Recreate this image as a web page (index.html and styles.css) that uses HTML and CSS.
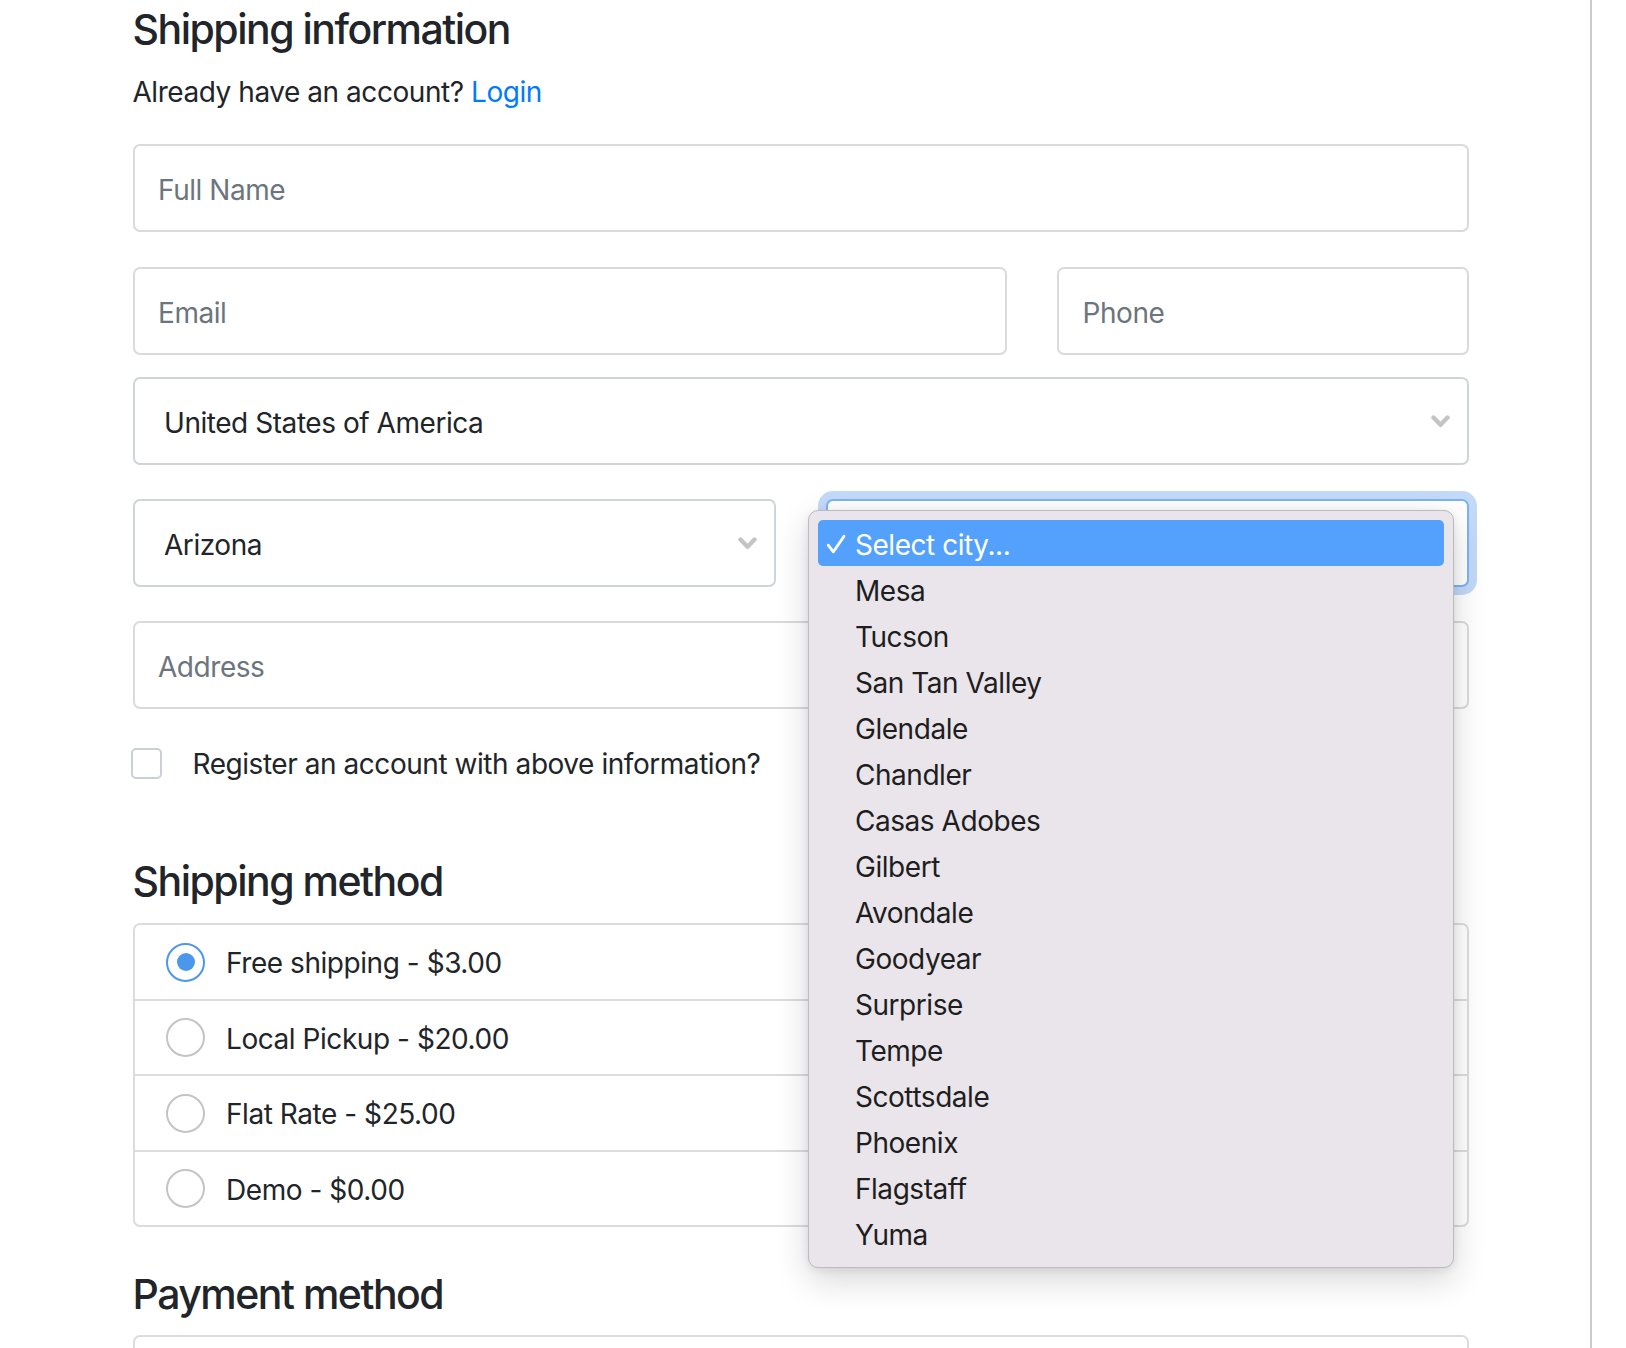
FILE: index.html
```html
<!DOCTYPE html>
<html lang="en">
<head>
<meta charset="utf-8">
<title>Checkout</title>
<link rel="stylesheet" href="styles.css">
</head>
<body>
<main class="main">
  <h4 class="title">Shipping information</h4>
  <p class="lead">Already have an account? <a href="#">Login</a></p>

  <div class="field input gap-35"><span class="ph">Full Name</span></div>

  <div class="row row-84 gap-22">
    <div class="field input"><span class="ph">Email</span></div>
    <div class="field input"><span class="ph">Phone</span></div>
  </div>

  <div class="field select gap-34">
    <span class="val">United States of America</span>
    <svg class="chev" width="19" height="13" viewBox="0 0 19 13"><polyline points="2.5,2.5 9.5,9.8 16.5,2.5" fill="none" stroke="#c4c4c4" stroke-width="4.4" stroke-linecap="round" stroke-linejoin="round"/></svg>
  </div>

  <div class="row row-66 gap-34">
    <div class="field select">
      <span class="val">Arizona</span>
      <svg class="chev" width="19" height="13" viewBox="0 0 19 13"><polyline points="2.5,2.5 9.5,9.8 16.5,2.5" fill="none" stroke="#c4c4c4" stroke-width="4.4" stroke-linecap="round" stroke-linejoin="round"/></svg>
    </div>
    <div class="field select focus">
      <div class="menu">
        <div class="opt sel"><svg class="mark" width="20" height="20" viewBox="0 0 20 20"><path d="M2.2 11.2 L7.4 17.8 L18 2.2" fill="none" stroke="#fff" stroke-width="2.8" stroke-linecap="round" stroke-linejoin="round"/></svg><span>Select city...</span></div>
        <div class="opt"><span class="mark"></span><span>Mesa</span></div>
        <div class="opt"><span class="mark"></span><span>Tucson</span></div>
        <div class="opt"><span class="mark"></span><span>San Tan Valley</span></div>
        <div class="opt"><span class="mark"></span><span>Glendale</span></div>
        <div class="opt"><span class="mark"></span><span>Chandler</span></div>
        <div class="opt"><span class="mark"></span><span>Casas Adobes</span></div>
        <div class="opt"><span class="mark"></span><span>Gilbert</span></div>
        <div class="opt"><span class="mark"></span><span>Avondale</span></div>
        <div class="opt"><span class="mark"></span><span>Goodyear</span></div>
        <div class="opt"><span class="mark"></span><span>Surprise</span></div>
        <div class="opt"><span class="mark"></span><span>Tempe</span></div>
        <div class="opt"><span class="mark"></span><span>Scottsdale</span></div>
        <div class="opt"><span class="mark"></span><span>Phoenix</span></div>
        <div class="opt"><span class="mark"></span><span>Flagstaff</span></div>
        <div class="opt"><span class="mark"></span><span>Yuma</span></div>
      </div>
    </div>
  </div>

  <div class="field input"><span class="ph">Address</span></div>

  <label class="check"><span class="cbox"></span><span>Register an account with above information?</span></label>

  <h4 class="title ship">Shipping method</h4>
  <ul class="list">
    <li><span class="radio on"></span><span>Free shipping - $3.00</span></li>
    <li><span class="radio"></span><span>Local Pickup - $20.00</span></li>
    <li><span class="radio"></span><span>Flat Rate - $25.00</span></li>
    <li><span class="radio"></span><span>Demo - $0.00</span></li>
  </ul>

  <h4 class="title pay">Payment method</h4>
  <div class="paybox"></div>
</main>
</body>
</html>
```

FILE: styles.css
```css
* { box-sizing: border-box; }

html, body {
  margin: 0;
  height: 1348px;
  overflow: hidden;
  background: #fff;
}

body {
  font-family: Inter, "Noto Sans", sans-serif;
  font-size: 28px;
  letter-spacing: -0.45px;
  color: #212529;
}

.main {
  width: 1592px;
  min-height: 1348px;
  padding: 4px 121px 0 132.5px;
  border-right: 2px solid #cbcbcb;
}

.title {
  margin: 0;
  font-size: 41px;
  font-weight: 500;
  line-height: 50px;
  letter-spacing: -1.5px;
  color: #212529;
}

.lead {
  margin: 16.5px 0 31.8px;
  line-height: 42px;
}

.lead a {
  color: #007bff;
  text-decoration: none;
}

.field {
  height: 88px;
  border: 2px solid #dadada;
  border-radius: 7px;
  background: #fff;
  display: flex;
  align-items: center;
  line-height: 42px;
  position: relative;
}

.input {
  padding: 3px 20px 0 23.5px;
}

.ph { color: #6c757d; }

.select {
  padding: 4px 17px 0 29.5px;
  border-color: #cfd4d9;
}

.select .val { flex: 1; color: #212529; }

.chev { flex: none; margin-top: -4px; }

.gap-35 { margin-bottom: 35px; }
.gap-22 { margin-bottom: 22px; }
.gap-34 { margin-bottom: 34px; }

.row { display: grid; column-gap: 50px; }
.row-84 { grid-template-columns: 874.5px 1fr; }
.row-66 { grid-template-columns: 1fr 1fr; }

.focus {
  border-color: #7db3f3;
  box-shadow: 0 0 0 8px #c3d9f9;
}

.menu {
  position: absolute;
  left: -20.2px;
  top: 8.5px;
  width: 646px;
  height: 758px;
  z-index: 10;
  background: #e9e5eb;
  border: 1px solid #bcbabe;
  border-radius: 10px;
  padding: 9.5px 9px;
  box-shadow: 0 12px 34px rgba(0, 0, 0, 0.16), 0 2px 8px rgba(0, 0, 0, 0.08);
}

.opt {
  height: 46px;
  display: flex;
  align-items: center;
  padding: 4px 0 0 8.4px;
  border-radius: 5px;
  color: #1e1e20;
  line-height: 42px;
}

.opt .mark {
  width: 20px;
  height: 20px;
  flex: none;
  margin-right: 9px;
  margin-top: -3px;
}

.opt.sel {
  background: #54a1fd;
  color: #fff;
}

.check {
  display: flex;
  align-items: center;
  height: 42px;
  margin: 33.5px 0 0 -2px;
  line-height: 42px;
}

.cbox {
  width: 31px;
  height: 31px;
  border: 2px solid #c9d0d8;
  border-radius: 5px;
  margin-right: 31px;
  flex: none;
}

.ship { margin: 71.2px 0 17.3px; }

.list {
  list-style: none;
  margin: 0;
  padding: 0;
  border: 2px solid #dcdcdc;
  border-radius: 7px;
}

.list li {
  height: 75.5px;
  border-top: 2px solid #dcdcdc;
  display: flex;
  align-items: center;
  padding: 2px 0 0 31.5px;
  line-height: 42px;
}

.list li:first-child {
  border-top: 0;
  height: 73.5px;
}

.radio {
  width: 39px;
  height: 39px;
  border: 2px solid #c4c4c4;
  border-radius: 50%;
  margin: -2px 21px 0 0;
  flex: none;
  display: flex;
  align-items: center;
  justify-content: center;
}

.radio.on { border-color: #4b98ea; }

.radio.on::after {
  content: "";
  width: 18px;
  height: 18px;
  border-radius: 50%;
  background: #4b98ea;
}

.pay { margin: 41.7px 0 16px; }

.paybox {
  height: 60px;
  border: 2px solid #dcdcdc;
  border-radius: 7px 7px 0 0;
}
```
